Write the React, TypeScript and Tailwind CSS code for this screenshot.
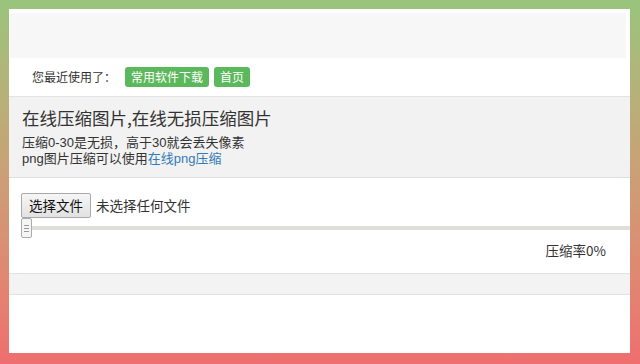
import React from "react";

const font = { fontFamily: '"Noto Sans CJK SC", "Liberation Sans", sans-serif' };
const tight = { fontFamily: '"Liberation Sans", "Noto Sans CJK SC", sans-serif' };

function Badge({ children }: { children: React.ReactNode }) {
  return (
    <span className="inline-flex h-[20px] items-center rounded-[3px] bg-[#5cb85c] px-[6px] text-[12px] leading-none text-white">
      {children}
    </span>
  );
}

export default function App() {
  return (
    <div
      className="flex h-[364px] w-[640px] flex-col bg-gradient-to-b from-[#98c47b] to-[#ef6e6f] pb-[11px] pl-[9px] pr-[10px] pt-[9px] text-[#333]"
      style={font}
    >
      <div className="flex flex-1 flex-col overflow-hidden bg-white">
        {/* top navbar area */}
        <div className="ml-[1px] mr-[4px] mt-[4px] h-[45px] bg-[#f7f7f7]" />

        {/* recently used */}
        <div className="flex h-[39px] items-center gap-[5px] border-b border-[#e3e3e3] pl-[23px]">
          <span className="mr-[4px] text-[12px] leading-none">您最近使用了：</span>
          <Badge>常用软件下载</Badge>
          <Badge>首页</Badge>
        </div>

        {/* intro */}
        <div className="flex h-[81px] flex-col border-b border-[#dedede] bg-[#f2f2f2] pl-[13px] pt-[9px]">
          <h1 className="text-[17.5px] leading-[24px] font-normal">在线压缩图片,在线无损压缩图片</h1>
          <p className="mt-[5px] text-[13px] leading-[16px]" style={tight}>压缩0-30是无损，高于30就会丢失像素</p>
          <p className="text-[13px] leading-[16px]" style={tight}>
            png图片压缩可以使用<a className="text-[#337ab7]">在线png压缩</a>
          </p>
        </div>

        {/* upload */}
        <div className="flex flex-col pl-[12px] pt-[15px]">
          <div className="flex items-center gap-[5px]">
            <button className="h-[25px] rounded-[2px] border border-[#a9a9a9] bg-gradient-to-b from-[#f6f6f6] to-[#e2e2e2] px-[7px] text-[13.5px] leading-none text-[#111]">
              选择文件
            </button>
            <span className="text-[13.5px] leading-none">未选择任何文件</span>
          </div>
          <div className="-mr-[3px] flex h-[20px] items-center">
            <div className="flex h-[20px] w-[11px] flex-col items-center justify-center gap-[2px] rounded-[2px] border border-[#aaa] bg-[#f5f5f5]">
              <span className="h-px w-[5px] bg-[#999]" />
              <span className="h-px w-[5px] bg-[#999]" />
              <span className="h-px w-[5px] bg-[#999]" />
            </div>
            <div className="h-[4px] flex-1 bg-[#e2dfdb]" />
          </div>
          <div className="flex justify-end pr-[24px] pt-[2px]">
            <span className="text-[13.5px] leading-[20px]">压缩率0%</span>
          </div>
        </div>

        <div className="mt-[13px] h-[22px] border-y border-[#e2e2e2] bg-[#f3f3f3]" />
      </div>
    </div>
  );
}
